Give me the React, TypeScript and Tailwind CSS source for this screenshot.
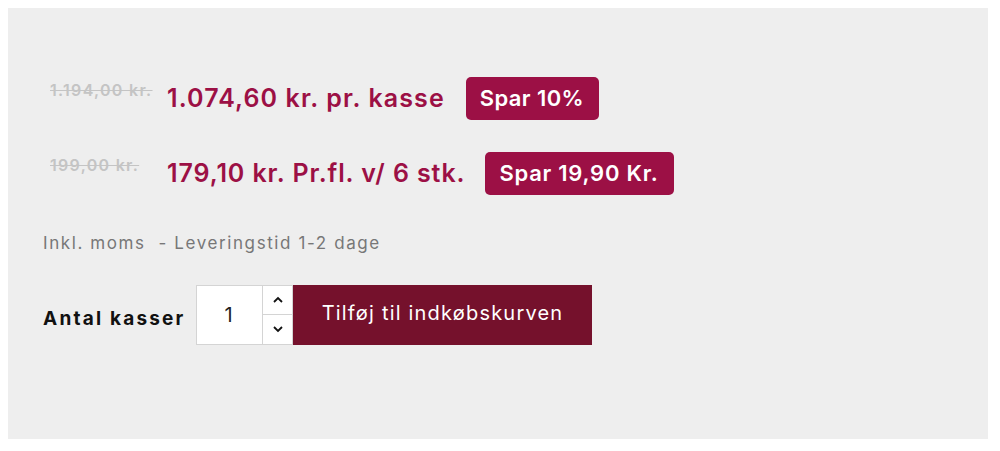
import React from "react";

const font = { fontFamily: "Inter, 'Noto Sans', sans-serif" };

export default function App() {
  return (
    <div className="w-[1000px] h-[451px] bg-white p-[8px]" style={font}>
      <div className="w-[980px] h-[431px] bg-[#eeeeee] pl-[35px] pt-[69px]">
        <div className="flex items-center h-[43px] ml-[7px]">
          <span className="text-[16px] font-semibold text-[#c4c4c4] line-through tracking-[1.3px] w-[117px] mb-[18px]">1.194,00 kr.</span>
          <span className="text-[25px] font-semibold text-[#9c1045] tracking-[1.1px]">1.074,60 kr. pr. kasse</span>
          <span className="ml-[21px] h-[43px] pl-[14px] pr-[15px] flex items-center rounded-[5px] bg-[#9c1045] text-white text-[22px] font-semibold tracking-[0.4px]">Spar 10%</span>
        </div>
        <div className="flex items-center h-[43px] ml-[7px] mt-[32px]">
          <span className="text-[16px] font-semibold text-[#c4c4c4] line-through tracking-[1.3px] w-[117px] mb-[18px]">199,00 kr.</span>
          <span className="text-[25px] font-semibold text-[#9c1045] tracking-[0.9px]">179,10 kr. Pr.fl. v/ 6 stk.</span>
          <span className="ml-[20px] h-[43px] pl-[14px] pr-[15px] flex items-center rounded-[5px] bg-[#9c1045] text-white text-[22px] font-semibold tracking-[0.75px]">Spar 19,90 Kr.</span>
        </div>
        <div className="mt-[36px] text-[17px] text-[#777777] tracking-[1.6px]">Inkl. moms&nbsp; - Leveringstid 1-2 dage</div>
        <div className="flex items-center mt-[28px]">
          <span className="text-[19px] font-bold text-[#111111] mt-[10px] w-[153px] tracking-[2.2px]">Antal kasser</span>
          <div className="flex h-[60px] border border-[#d4d4d4] bg-white">
            <div className="w-[65px] flex items-center justify-center text-[20px] text-[#222] pr-[2px]">1</div>
            <div className="w-[30px] flex flex-col border-l border-[#d4d4d4]">
              <div className="flex-1 flex items-center justify-center border-b border-[#d4d4d4]">
                <svg width="10" height="7" viewBox="0 0 10 7"><path d="M1 6 L5 2 L9 6" stroke="#111" strokeWidth="1.8" fill="none" /></svg>
              </div>
              <div className="flex-1 flex items-center justify-center">
                <svg width="10" height="7" viewBox="0 0 10 7"><path d="M1 1 L5 5 L9 1" stroke="#111" strokeWidth="1.8" fill="none" /></svg>
              </div>
            </div>
          </div>
          <button className="h-[60px] w-[299px] bg-[#75112c] text-white text-[20px] tracking-[1.2px] flex items-center justify-center pb-[4px]">Tilføj til indkøbskurven</button>
        </div>
      </div>
    </div>
  );
}
